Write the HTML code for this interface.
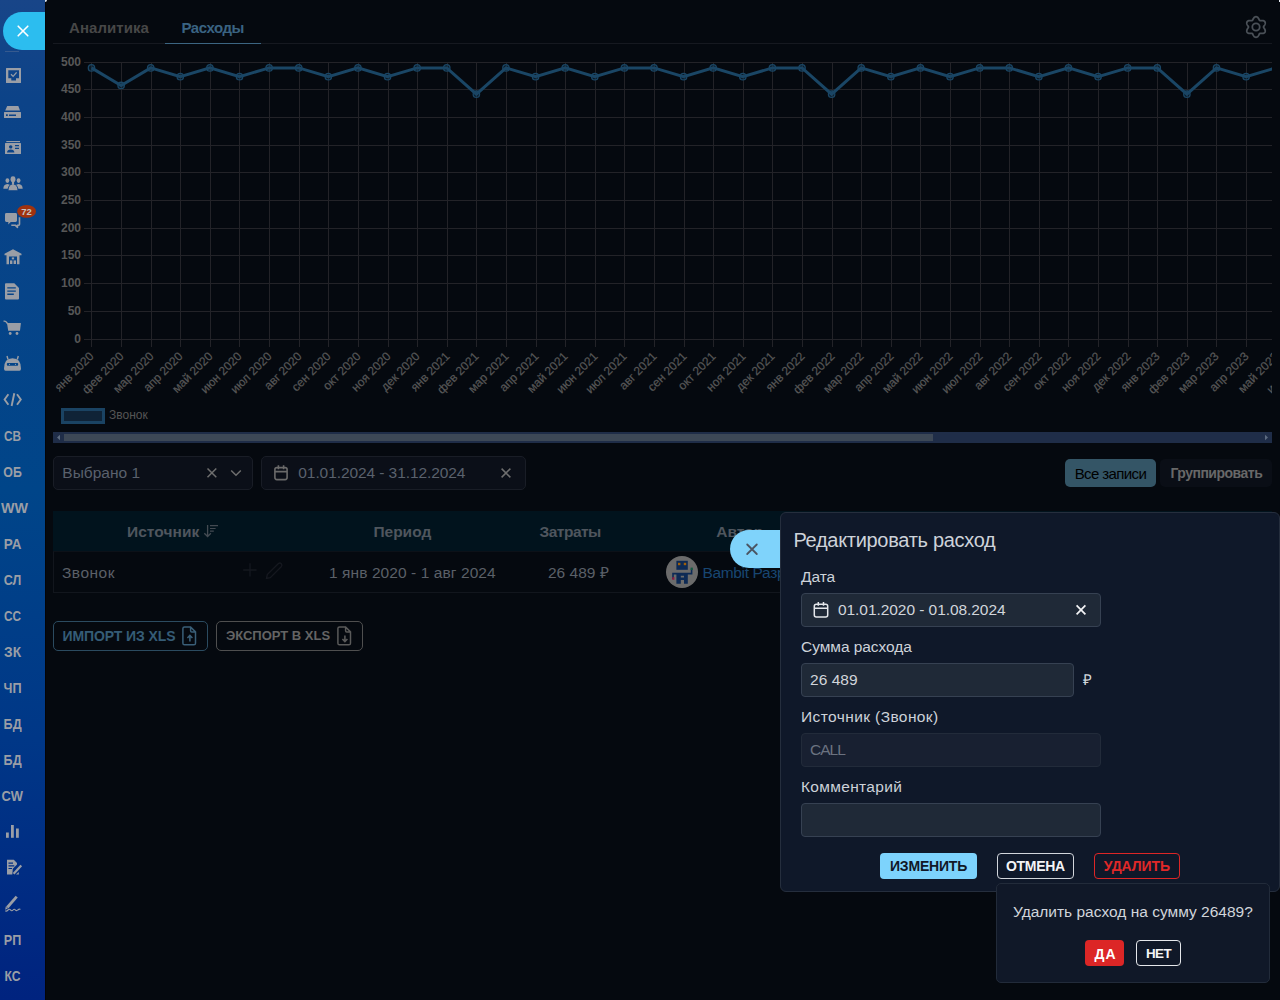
<!DOCTYPE html>
<html><head><meta charset="utf-8">
<style>
*{box-sizing:border-box;margin:0;padding:0}
html,body{width:1280px;height:1000px;overflow:hidden;background:#05090f;font-family:"Liberation Sans",sans-serif}
.abs{position:absolute}
.t{position:absolute;line-height:1;white-space:nowrap}
.sb{position:absolute;left:0;top:0;width:45px;height:1000px;background:linear-gradient(180deg,#184588 0%,#0c4388 10%,#004589 49%,#003787 74%,#00237f 100%)}
.pill{position:absolute;left:3px;top:12px;width:42px;height:38px;border-radius:19px 0 0 19px;background:#2cbdef}
.chart .yl{font-size:12px;font-weight:bold;fill:#575757;font-family:"Liberation Sans",sans-serif}
.chart .xl{font-size:12px;fill:#575757;stroke:#575757;stroke-width:0.2px;font-family:"Liberation Sans",sans-serif}
.inp{position:absolute;border:1px solid #191d26;background:#0b0f18;border-radius:5px}
.th{position:absolute;top:523.6px;font-size:15.5px;font-weight:bold;color:#4f565e;line-height:1;white-space:nowrap}
.td{position:absolute;top:564.6px;font-size:15.5px;color:#5b6068;line-height:1;white-space:nowrap}
.panel{position:absolute;left:780px;top:512px;width:500px;height:380px;background:#0f1829;border:1px solid #252e3d;border-radius:6px}
.lbl{position:absolute;left:801px;font-size:15.5px;color:#cdd2d9;line-height:1;white-space:nowrap}
.fin{position:absolute;left:801px;background:#1f2937;border:1px solid #364152;border-radius:4px}
.pb{position:absolute;border-radius:4px}
.pbt{position:absolute;font-weight:bold;font-size:14px;line-height:1;white-space:nowrap}
</style></head>
<body>
<!-- sidebar -->
<div class="sb"></div>
<div class="abs" style="left:45px;top:0;width:1px;height:1000px;background:#040406"></div>
<div class="abs" style="left:45px;top:0;width:2px;height:2px;border-radius:0 0 2px 0;background:#dfe6f0"></div>
<div class="abs" style="left:1279px;top:0;width:1px;height:2px;background:#e8ecf2"></div>
<div class="pill"></div>
<svg class="abs" style="left:17px;top:25px" width="12" height="12" viewBox="0 0 12 12"><path d="M1.2 1.2L10.8 10.8M10.8 1.2L1.2 10.8" stroke="#fff" stroke-width="1.6" stroke-linecap="round"/></svg>
<div class="abs" style="left:5px;top:51px;width:14px;height:1px;background:#5a6f95;opacity:.5"></div>
<svg class="abs" style="left:0;top:0" width="45" height="1000" viewBox="0 0 45 1000">
<g fill="#9a9ea6" stroke="none">
<path fill-rule="evenodd" d="M6 68.5Q6 68 6.5 68H20.5Q21 68 21 68.5V82.5Q21 83 20.5 83H6.5Q6 83 6 82.5Z M8.3 70.2H19V78.2H16V80.6H11.3V78.2H8.3Z"/>
<path d="M11 74.3L13.1 76.4L16.6 72.3" stroke="#9a9ea6" stroke-width="1.3" fill="none"/>
<path d="M7.2 106H18.3L20 110.4H5.2Z"/>
<path fill-rule="evenodd" d="M4.5 112H20.5Q21 112 21 112.5V117.5Q21 118 20.5 118H4.5Q4 118 4 117.5V112.5Q4 112 4.5 112Z M6 114.3H7.8V116H6Z M9 114.4H16V115.9H9Z"/>
<rect x="6.3" y="141" width="13.7" height="1.1"/>
<path fill-rule="evenodd" d="M5.6 143H20.4Q21 143 21 143.6V153.4Q21 154 20.4 154H5.6Q5 154 5 153.4V143.6Q5 143 5.6 143Z M10.7 145.2A1.7 1.7 0 1 0 10.71 145.2Z M7 152.4Q7.2 149.6 10.7 149.4Q14.2 149.6 14.4 152.4Z M15 145H19V146.3H15Z M15 147.7H19V149H15Z"/>
<ellipse cx="7.4" cy="180.6" rx="1.9" ry="2.4"/><path d="M3.3 188.8Q3.5 184.4 7.4 184.1Q11.3 184.4 11.5 188.8Z"/>
<ellipse cx="18.6" cy="180.6" rx="1.9" ry="2.4"/><path d="M14.5 188.8Q14.7 184.4 18.6 184.1Q22.5 184.4 22.7 188.8Z"/>
<g stroke="#0a4388" stroke-width="1"><ellipse cx="13" cy="179.2" rx="2.4" ry="2.9"/><path d="M7.9 190.8Q8.2 184.2 13 183.9Q17.8 184.2 18.1 190.8Z"/></g><path d="M11.9 181H14.1V184.8H11.9Z"/><ellipse cx="13" cy="179.2" rx="2.4" ry="2.9"/>
<path d="M6.4 213H15.6Q17 213 17 214.4V220.6Q17 222 15.6 222H10.8L8.2 224.6L8.4 222H6.4Q5 222 5 220.6V214.4Q5 213 6.4 213Z"/>
<path d="M19.5 217.2V224.3Q19.5 225.2 18.6 225.2H17.4L17.5 227.4L15.2 225.2H11.3" stroke="#9a9ea6" stroke-width="1.6" fill="none" stroke-linejoin="round"/>
<ellipse cx="26.6" cy="211.4" rx="9.4" ry="6.4" fill="#a0320f"/>
<text x="26.6" y="215.1" text-anchor="middle" font-size="9.5" font-weight="bold" fill="#c6c6c6" font-family="Liberation Sans,sans-serif">72</text>
<path fill-rule="evenodd" d="M13 249.2L21.5 253.8V255.2H19.5V264.3H6.5V255.2H4.5V253.8Z M9 256.5H17V264.3H9Z"/>
<rect x="11.8" y="257.4" width="2.3" height="2"/><rect x="10" y="260.4" width="2.4" height="3.6"/><rect x="13.6" y="260.4" width="2.4" height="3.6"/>
<path fill-rule="evenodd" d="M5.9 283.2H14.3L19 288V298.6Q19 299.6 18 299.6H5.9Q5 299.6 5 298.6V284.2Q5 283.2 5.9 283.2Z M7.3 287.3H15.8V288.6H7.3Z M7.3 290.5H15.8V291.8H7.3Z M7.3 293.6H13.8V294.9H7.3Z"/>
<path d="M3.6 321.2Q5.8 320.8 6.4 322.2L7.8 324" stroke="#9a9ea6" stroke-width="1.4" fill="none"/>
<path d="M7 323H20.9L20 330.8H8.2Z"/>
<circle cx="10.2" cy="333.5" r="1.4"/><circle cx="17" cy="333.5" r="1.4"/>
<path fill-rule="evenodd" d="M4 368.6Q4 358.2 12.5 358.2Q21 358.2 21 368.6Q21 370.8 19.5 370.8H5.5Q4 370.8 4 368.6Z M7.8 362.9H17.2Q18.2 362.9 18.2 364.3Q18.2 365.8 17.2 365.8H7.8Q6.8 365.8 6.8 364.3Q6.8 362.9 7.8 362.9Z"/>
<path d="M7 356L8 359.5M18.3 356L17.3 359.5" stroke="#9a9ea6" stroke-width="1.4"/>
<circle cx="9.5" cy="364.3" r="0.6"/><circle cx="15.5" cy="364.3" r="0.6"/>
<path d="M8.4 394.3L4.6 399.5L8.4 404.8M17 394.3L20.8 399.5L17 404.8" stroke="#9a9ea6" stroke-width="1.9" fill="none"/>
<path d="M14.3 393.2L11.6 406" stroke="#9a9ea6" stroke-width="1.9" fill="none"/>
<rect x="6" y="832.5" width="2.8" height="5.3"/><rect x="11" y="825" width="2.8" height="12.8"/><rect x="16" y="828.5" width="2.8" height="9.3"/>
<path fill-rule="evenodd" d="M7 859.8H13.8L17 863V864.6L12.8 868.8L12.3 874.6H7Z M8.5 862.6H13V863.7H8.5Z M8.5 865.3H14.3V866.4H8.5Z M8.5 868H12V869.1H8.5Z"/>
<path d="M13.6 873.8L21.3 865.6" stroke="#9a9ea6" stroke-width="2.2"/>
<path d="M16 874.6H18.8V872Z"/>
<path d="M7.2 907.5L16.7 896.6" stroke="#9a9ea6" stroke-width="2.8"/>
<path d="M5.2 909.8L5.8 906.5L7.8 908.6Z"/>
<path d="M5.3 910.8Q6.5 911.6 8 910Q9.5 908.5 10.5 909.8Q11.8 911.5 13 910Q14.3 908.5 15.3 909.8Q16.6 911.3 17.8 910Q19.2 908.6 20.5 909.4" stroke="#9a9ea6" stroke-width="1.1" fill="none"/>
</g>
<text x="12.6" y="441.1" text-anchor="middle" font-size="14" font-weight="bold" fill="#9a9ea6" font-family="Liberation Sans,sans-serif" textLength="17" lengthAdjust="spacingAndGlyphs" >СВ</text>
<text x="12.6" y="477.1" text-anchor="middle" font-size="14" font-weight="bold" fill="#9a9ea6" font-family="Liberation Sans,sans-serif" textLength="18.5" lengthAdjust="spacingAndGlyphs" >ОБ</text>
<text x="14.4" y="513.1" text-anchor="middle" font-size="14" font-weight="bold" fill="#9a9ea6" font-family="Liberation Sans,sans-serif" textLength="27" lengthAdjust="spacingAndGlyphs" >WW</text>
<text x="12.6" y="549.1" text-anchor="middle" font-size="14" font-weight="bold" fill="#9a9ea6" font-family="Liberation Sans,sans-serif" textLength="17.5" lengthAdjust="spacingAndGlyphs" >РА</text>
<text x="12.6" y="585.1" text-anchor="middle" font-size="14" font-weight="bold" fill="#9a9ea6" font-family="Liberation Sans,sans-serif" textLength="17.5" lengthAdjust="spacingAndGlyphs" >СЛ</text>
<text x="12.6" y="621.1" text-anchor="middle" font-size="14" font-weight="bold" fill="#9a9ea6" font-family="Liberation Sans,sans-serif" textLength="17" lengthAdjust="spacingAndGlyphs" >СС</text>
<text x="12.6" y="657.1" text-anchor="middle" font-size="14" font-weight="bold" fill="#9a9ea6" font-family="Liberation Sans,sans-serif" textLength="17" lengthAdjust="spacingAndGlyphs" >ЗК</text>
<text x="12.6" y="693.1" text-anchor="middle" font-size="14" font-weight="bold" fill="#9a9ea6" font-family="Liberation Sans,sans-serif" textLength="18" lengthAdjust="spacingAndGlyphs" >ЧП</text>
<text x="12.6" y="729.1" text-anchor="middle" font-size="14" font-weight="bold" fill="#9a9ea6" font-family="Liberation Sans,sans-serif" textLength="18" lengthAdjust="spacingAndGlyphs" >БД</text>
<text x="12.6" y="765.1" text-anchor="middle" font-size="14" font-weight="bold" fill="#9a9ea6" font-family="Liberation Sans,sans-serif" textLength="18" lengthAdjust="spacingAndGlyphs" >БД</text>
<text x="12.3" y="801.1" text-anchor="middle" font-size="14" font-weight="bold" fill="#9a9ea6" font-family="Liberation Sans,sans-serif" textLength="21.5" lengthAdjust="spacingAndGlyphs" >CW</text>
<text x="12.6" y="945.1" text-anchor="middle" font-size="14" font-weight="bold" fill="#9a9ea6" font-family="Liberation Sans,sans-serif" textLength="17.5" lengthAdjust="spacingAndGlyphs" >РП</text>
<text x="12.6" y="981.1" text-anchor="middle" font-size="14" font-weight="bold" fill="#9a9ea6" font-family="Liberation Sans,sans-serif" textLength="16" lengthAdjust="spacingAndGlyphs" >КС</text>
</svg>

<!-- tabs -->
<div class="abs" style="left:53px;top:43px;width:1219px;height:1px;background:#161920"></div>
<div class="t" style="left:69px;top:20.1px;font-size:15px;font-weight:bold;color:#474747;letter-spacing:0.05px">Аналитика</div>
<div class="t" style="left:181.5px;top:20.1px;font-size:15px;font-weight:bold;color:#3a6382;letter-spacing:-0.45px">Расходы</div>
<div class="abs" style="left:165px;top:43px;width:96px;height:1px;background:#3c6582"></div>
<svg class="abs" style="left:0;top:0" width="1280" height="50"><path d="M1263.50 27.00 L1263.55 27.20 L1263.63 27.40 L1263.75 27.61 L1263.88 27.83 L1264.03 28.06 L1264.19 28.30 L1264.35 28.55 L1264.51 28.81 L1264.66 29.08 L1264.80 29.36 L1264.92 29.64 L1265.03 29.93 L1265.11 30.23 L1265.18 30.52 L1265.21 30.81 L1265.21 31.10 L1265.19 31.38 L1265.13 31.65 L1265.04 31.91 L1264.92 32.15 L1264.77 32.37 L1264.59 32.58 L1264.39 32.76 L1264.16 32.93 L1263.91 33.07 L1263.64 33.18 L1263.35 33.28 L1263.06 33.35 L1262.75 33.41 L1262.44 33.44 L1262.13 33.46 L1261.82 33.46 L1261.51 33.46 L1261.22 33.44 L1260.93 33.43 L1260.66 33.41 L1260.40 33.41 L1260.16 33.41 L1259.94 33.44 L1259.75 33.50 L1259.60 33.63 L1259.47 33.81 L1259.35 34.02 L1259.22 34.24 L1259.10 34.49 L1258.97 34.74 L1258.83 35.00 L1258.69 35.27 L1258.53 35.54 L1258.36 35.80 L1258.17 36.05 L1257.97 36.29 L1257.76 36.51 L1257.54 36.71 L1257.30 36.88 L1257.05 37.03 L1256.80 37.15 L1256.54 37.23 L1256.27 37.28 L1256.00 37.30 L1255.73 37.28 L1255.46 37.23 L1255.20 37.15 L1254.95 37.03 L1254.70 36.88 L1254.46 36.71 L1254.24 36.51 L1254.03 36.29 L1253.83 36.05 L1253.64 35.80 L1253.47 35.54 L1253.31 35.27 L1253.17 35.00 L1253.03 34.74 L1252.90 34.49 L1252.78 34.24 L1252.65 34.02 L1252.53 33.81 L1252.40 33.63 L1252.25 33.50 L1252.06 33.44 L1251.84 33.41 L1251.60 33.41 L1251.34 33.41 L1251.07 33.43 L1250.78 33.44 L1250.49 33.46 L1250.18 33.46 L1249.87 33.46 L1249.56 33.44 L1249.25 33.41 L1248.94 33.35 L1248.65 33.28 L1248.36 33.18 L1248.09 33.07 L1247.84 32.93 L1247.61 32.76 L1247.41 32.58 L1247.23 32.37 L1247.08 32.15 L1246.96 31.91 L1246.87 31.65 L1246.81 31.38 L1246.79 31.10 L1246.79 30.81 L1246.82 30.52 L1246.89 30.23 L1246.97 29.93 L1247.08 29.64 L1247.20 29.36 L1247.34 29.08 L1247.49 28.81 L1247.65 28.55 L1247.81 28.30 L1247.97 28.06 L1248.12 27.83 L1248.25 27.61 L1248.37 27.40 L1248.45 27.20 L1248.50 27.00 L1248.45 26.80 L1248.37 26.60 L1248.25 26.39 L1248.12 26.17 L1247.97 25.94 L1247.81 25.70 L1247.65 25.45 L1247.49 25.19 L1247.34 24.92 L1247.20 24.64 L1247.08 24.36 L1246.97 24.07 L1246.89 23.77 L1246.82 23.48 L1246.79 23.19 L1246.79 22.90 L1246.81 22.62 L1246.87 22.35 L1246.96 22.09 L1247.08 21.85 L1247.23 21.63 L1247.41 21.42 L1247.61 21.24 L1247.84 21.07 L1248.09 20.93 L1248.36 20.82 L1248.65 20.72 L1248.94 20.65 L1249.25 20.59 L1249.56 20.56 L1249.87 20.54 L1250.18 20.54 L1250.49 20.54 L1250.78 20.56 L1251.07 20.57 L1251.34 20.59 L1251.60 20.59 L1251.84 20.59 L1252.06 20.56 L1252.25 20.50 L1252.40 20.37 L1252.53 20.19 L1252.65 19.98 L1252.78 19.76 L1252.90 19.51 L1253.03 19.26 L1253.17 19.00 L1253.31 18.73 L1253.47 18.46 L1253.64 18.20 L1253.83 17.95 L1254.03 17.71 L1254.24 17.49 L1254.46 17.29 L1254.70 17.12 L1254.95 16.97 L1255.20 16.85 L1255.46 16.77 L1255.73 16.72 L1256.00 16.70 L1256.27 16.72 L1256.54 16.77 L1256.80 16.85 L1257.05 16.97 L1257.30 17.12 L1257.54 17.29 L1257.76 17.49 L1257.97 17.71 L1258.17 17.95 L1258.36 18.20 L1258.53 18.46 L1258.69 18.73 L1258.83 19.00 L1258.97 19.26 L1259.10 19.51 L1259.22 19.76 L1259.35 19.98 L1259.47 20.19 L1259.60 20.37 L1259.75 20.50 L1259.94 20.56 L1260.16 20.59 L1260.40 20.59 L1260.66 20.59 L1260.93 20.57 L1261.22 20.56 L1261.51 20.54 L1261.82 20.54 L1262.13 20.54 L1262.44 20.56 L1262.75 20.59 L1263.06 20.65 L1263.35 20.72 L1263.64 20.82 L1263.91 20.93 L1264.16 21.07 L1264.39 21.24 L1264.59 21.42 L1264.77 21.63 L1264.92 21.85 L1265.04 22.09 L1265.13 22.35 L1265.19 22.62 L1265.21 22.90 L1265.21 23.19 L1265.18 23.48 L1265.11 23.77 L1265.03 24.07 L1264.92 24.36 L1264.80 24.64 L1264.66 24.92 L1264.51 25.19 L1264.35 25.45 L1264.19 25.70 L1264.03 25.94 L1263.88 26.17 L1263.75 26.39 L1263.63 26.60 L1263.55 26.80 L1263.50 27.00Z" fill="none" stroke="#4a5057" stroke-width="1.8" stroke-linejoin="round"/><circle cx="1256" cy="27" r="3.7" fill="none" stroke="#4a5057" stroke-width="1.8"/></svg>

<svg class="chart" width="1280" height="460" viewBox="0 0 1280 460" style="position:absolute;left:0;top:0">
<defs><clipPath id="cc"><rect x="53" y="44" width="1219" height="400"/></clipPath></defs>
<g clip-path="url(#cc)">
<path d="M84 62.5H1272 M84 89.5H1272 M84 117.5H1272 M84 145.5H1272 M84 172.5H1272 M84 200.5H1272 M84 228.5H1272 M84 255.5H1272 M84 283.5H1272 M84 311.5H1272 M84 339.5H1272 M91.5 62V347 M121.5 62V347 M151.5 62V347 M180.5 62V347 M210.5 62V347 M239.5 62V347 M269.5 62V347 M299.5 62V347 M328.5 62V347 M358.5 62V347 M388.5 62V347 M417.5 62V347 M447.5 62V347 M476.5 62V347 M506.5 62V347 M536.5 62V347 M565.5 62V347 M595.5 62V347 M624.5 62V347 M654.5 62V347 M684.5 62V347 M713.5 62V347 M743.5 62V347 M772.5 62V347 M802.5 62V347 M832.5 62V347 M861.5 62V347 M891.5 62V347 M920.5 62V347 M950.5 62V347 M980.5 62V347 M1009.5 62V347 M1039.5 62V347 M1068.5 62V347 M1098.5 62V347 M1128.5 62V347 M1157.5 62V347 M1187.5 62V347 M1216.5 62V347 M1246.5 62V347 M1276.5 62V347" stroke="#232328" stroke-width="1" fill="none"/>
<text x="81" y="65.9" text-anchor="end" class="yl">500</text>
<text x="81" y="92.9" text-anchor="end" class="yl">450</text>
<text x="81" y="120.9" text-anchor="end" class="yl">400</text>
<text x="81" y="148.9" text-anchor="end" class="yl">350</text>
<text x="81" y="175.9" text-anchor="end" class="yl">300</text>
<text x="81" y="203.9" text-anchor="end" class="yl">250</text>
<text x="81" y="231.9" text-anchor="end" class="yl">200</text>
<text x="81" y="258.9" text-anchor="end" class="yl">150</text>
<text x="81" y="286.9" text-anchor="end" class="yl">100</text>
<text x="81" y="314.9" text-anchor="end" class="yl">50</text>
<text x="81" y="342.9" text-anchor="end" class="yl">0</text>
<text transform="translate(94.5,357) rotate(-45)" text-anchor="end" class="xl">янв 2020</text>
<text transform="translate(124.5,357) rotate(-45)" text-anchor="end" class="xl">фев 2020</text>
<text transform="translate(154.5,357) rotate(-45)" text-anchor="end" class="xl">мар 2020</text>
<text transform="translate(183.5,357) rotate(-45)" text-anchor="end" class="xl">апр 2020</text>
<text transform="translate(213.5,357) rotate(-45)" text-anchor="end" class="xl">май 2020</text>
<text transform="translate(242.5,357) rotate(-45)" text-anchor="end" class="xl">июн 2020</text>
<text transform="translate(272.5,357) rotate(-45)" text-anchor="end" class="xl">июл 2020</text>
<text transform="translate(302.5,357) rotate(-45)" text-anchor="end" class="xl">авг 2020</text>
<text transform="translate(331.5,357) rotate(-45)" text-anchor="end" class="xl">сен 2020</text>
<text transform="translate(361.5,357) rotate(-45)" text-anchor="end" class="xl">окт 2020</text>
<text transform="translate(391.5,357) rotate(-45)" text-anchor="end" class="xl">ноя 2020</text>
<text transform="translate(420.5,357) rotate(-45)" text-anchor="end" class="xl">дек 2020</text>
<text transform="translate(450.5,357) rotate(-45)" text-anchor="end" class="xl">янв 2021</text>
<text transform="translate(479.5,357) rotate(-45)" text-anchor="end" class="xl">фев 2021</text>
<text transform="translate(509.5,357) rotate(-45)" text-anchor="end" class="xl">мар 2021</text>
<text transform="translate(539.5,357) rotate(-45)" text-anchor="end" class="xl">апр 2021</text>
<text transform="translate(568.5,357) rotate(-45)" text-anchor="end" class="xl">май 2021</text>
<text transform="translate(598.5,357) rotate(-45)" text-anchor="end" class="xl">июн 2021</text>
<text transform="translate(627.5,357) rotate(-45)" text-anchor="end" class="xl">июл 2021</text>
<text transform="translate(657.5,357) rotate(-45)" text-anchor="end" class="xl">авг 2021</text>
<text transform="translate(687.5,357) rotate(-45)" text-anchor="end" class="xl">сен 2021</text>
<text transform="translate(716.5,357) rotate(-45)" text-anchor="end" class="xl">окт 2021</text>
<text transform="translate(746.5,357) rotate(-45)" text-anchor="end" class="xl">ноя 2021</text>
<text transform="translate(775.5,357) rotate(-45)" text-anchor="end" class="xl">дек 2021</text>
<text transform="translate(805.5,357) rotate(-45)" text-anchor="end" class="xl">янв 2022</text>
<text transform="translate(835.5,357) rotate(-45)" text-anchor="end" class="xl">фев 2022</text>
<text transform="translate(864.5,357) rotate(-45)" text-anchor="end" class="xl">мар 2022</text>
<text transform="translate(894.5,357) rotate(-45)" text-anchor="end" class="xl">апр 2022</text>
<text transform="translate(923.5,357) rotate(-45)" text-anchor="end" class="xl">май 2022</text>
<text transform="translate(953.5,357) rotate(-45)" text-anchor="end" class="xl">июн 2022</text>
<text transform="translate(983.5,357) rotate(-45)" text-anchor="end" class="xl">июл 2022</text>
<text transform="translate(1012.5,357) rotate(-45)" text-anchor="end" class="xl">авг 2022</text>
<text transform="translate(1042.5,357) rotate(-45)" text-anchor="end" class="xl">сен 2022</text>
<text transform="translate(1071.5,357) rotate(-45)" text-anchor="end" class="xl">окт 2022</text>
<text transform="translate(1101.5,357) rotate(-45)" text-anchor="end" class="xl">ноя 2022</text>
<text transform="translate(1131.5,357) rotate(-45)" text-anchor="end" class="xl">дек 2022</text>
<text transform="translate(1160.5,357) rotate(-45)" text-anchor="end" class="xl">янв 2023</text>
<text transform="translate(1190.5,357) rotate(-45)" text-anchor="end" class="xl">фев 2023</text>
<text transform="translate(1219.5,357) rotate(-45)" text-anchor="end" class="xl">мар 2023</text>
<text transform="translate(1249.5,357) rotate(-45)" text-anchor="end" class="xl">апр 2023</text>
<text transform="translate(1279.5,357) rotate(-45)" text-anchor="end" class="xl">май 2023</text>
<text transform="translate(1308.5,357) rotate(-45)" text-anchor="end" class="xl">июн 2023</text>
<path d="M91.50 67.90 L121.11 85.43 L150.71 67.90 L180.31 76.67 L209.92 67.90 L239.53 76.67 L269.13 67.90 L298.74 67.90 L328.34 76.67 L357.94 67.90 L387.55 76.67 L417.16 67.90 L446.76 67.90 L476.37 94.19 L505.97 67.90 L535.58 76.67 L565.18 67.90 L594.79 76.67 L624.39 67.90 L654.00 67.90 L683.60 76.67 L713.21 67.90 L742.81 76.67 L772.41 67.90 L802.02 67.90 L831.62 94.19 L861.23 67.90 L890.84 76.67 L920.44 67.90 L950.04 76.67 L979.65 67.90 L1009.25 67.90 L1038.86 76.67 L1068.47 67.90 L1098.07 76.67 L1127.67 67.90 L1157.28 67.90 L1186.88 94.19 L1216.49 67.90 L1246.10 76.67 L1275.70 67.90 L1305.31 76.67" stroke="#1a4665" stroke-width="3" fill="none" stroke-linejoin="miter"/>
<circle cx="91.50" cy="67.90" r="3.2" fill="rgba(26,70,101,0.3)" stroke="#1a4665" stroke-width="1.3"/>
<circle cx="121.11" cy="85.43" r="3.2" fill="rgba(26,70,101,0.3)" stroke="#1a4665" stroke-width="1.3"/>
<circle cx="150.71" cy="67.90" r="3.2" fill="rgba(26,70,101,0.3)" stroke="#1a4665" stroke-width="1.3"/>
<circle cx="180.31" cy="76.67" r="3.2" fill="rgba(26,70,101,0.3)" stroke="#1a4665" stroke-width="1.3"/>
<circle cx="209.92" cy="67.90" r="3.2" fill="rgba(26,70,101,0.3)" stroke="#1a4665" stroke-width="1.3"/>
<circle cx="239.53" cy="76.67" r="3.2" fill="rgba(26,70,101,0.3)" stroke="#1a4665" stroke-width="1.3"/>
<circle cx="269.13" cy="67.90" r="3.2" fill="rgba(26,70,101,0.3)" stroke="#1a4665" stroke-width="1.3"/>
<circle cx="298.74" cy="67.90" r="3.2" fill="rgba(26,70,101,0.3)" stroke="#1a4665" stroke-width="1.3"/>
<circle cx="328.34" cy="76.67" r="3.2" fill="rgba(26,70,101,0.3)" stroke="#1a4665" stroke-width="1.3"/>
<circle cx="357.94" cy="67.90" r="3.2" fill="rgba(26,70,101,0.3)" stroke="#1a4665" stroke-width="1.3"/>
<circle cx="387.55" cy="76.67" r="3.2" fill="rgba(26,70,101,0.3)" stroke="#1a4665" stroke-width="1.3"/>
<circle cx="417.16" cy="67.90" r="3.2" fill="rgba(26,70,101,0.3)" stroke="#1a4665" stroke-width="1.3"/>
<circle cx="446.76" cy="67.90" r="3.2" fill="rgba(26,70,101,0.3)" stroke="#1a4665" stroke-width="1.3"/>
<circle cx="476.37" cy="94.19" r="3.2" fill="rgba(26,70,101,0.3)" stroke="#1a4665" stroke-width="1.3"/>
<circle cx="505.97" cy="67.90" r="3.2" fill="rgba(26,70,101,0.3)" stroke="#1a4665" stroke-width="1.3"/>
<circle cx="535.58" cy="76.67" r="3.2" fill="rgba(26,70,101,0.3)" stroke="#1a4665" stroke-width="1.3"/>
<circle cx="565.18" cy="67.90" r="3.2" fill="rgba(26,70,101,0.3)" stroke="#1a4665" stroke-width="1.3"/>
<circle cx="594.79" cy="76.67" r="3.2" fill="rgba(26,70,101,0.3)" stroke="#1a4665" stroke-width="1.3"/>
<circle cx="624.39" cy="67.90" r="3.2" fill="rgba(26,70,101,0.3)" stroke="#1a4665" stroke-width="1.3"/>
<circle cx="654.00" cy="67.90" r="3.2" fill="rgba(26,70,101,0.3)" stroke="#1a4665" stroke-width="1.3"/>
<circle cx="683.60" cy="76.67" r="3.2" fill="rgba(26,70,101,0.3)" stroke="#1a4665" stroke-width="1.3"/>
<circle cx="713.21" cy="67.90" r="3.2" fill="rgba(26,70,101,0.3)" stroke="#1a4665" stroke-width="1.3"/>
<circle cx="742.81" cy="76.67" r="3.2" fill="rgba(26,70,101,0.3)" stroke="#1a4665" stroke-width="1.3"/>
<circle cx="772.41" cy="67.90" r="3.2" fill="rgba(26,70,101,0.3)" stroke="#1a4665" stroke-width="1.3"/>
<circle cx="802.02" cy="67.90" r="3.2" fill="rgba(26,70,101,0.3)" stroke="#1a4665" stroke-width="1.3"/>
<circle cx="831.62" cy="94.19" r="3.2" fill="rgba(26,70,101,0.3)" stroke="#1a4665" stroke-width="1.3"/>
<circle cx="861.23" cy="67.90" r="3.2" fill="rgba(26,70,101,0.3)" stroke="#1a4665" stroke-width="1.3"/>
<circle cx="890.84" cy="76.67" r="3.2" fill="rgba(26,70,101,0.3)" stroke="#1a4665" stroke-width="1.3"/>
<circle cx="920.44" cy="67.90" r="3.2" fill="rgba(26,70,101,0.3)" stroke="#1a4665" stroke-width="1.3"/>
<circle cx="950.04" cy="76.67" r="3.2" fill="rgba(26,70,101,0.3)" stroke="#1a4665" stroke-width="1.3"/>
<circle cx="979.65" cy="67.90" r="3.2" fill="rgba(26,70,101,0.3)" stroke="#1a4665" stroke-width="1.3"/>
<circle cx="1009.25" cy="67.90" r="3.2" fill="rgba(26,70,101,0.3)" stroke="#1a4665" stroke-width="1.3"/>
<circle cx="1038.86" cy="76.67" r="3.2" fill="rgba(26,70,101,0.3)" stroke="#1a4665" stroke-width="1.3"/>
<circle cx="1068.47" cy="67.90" r="3.2" fill="rgba(26,70,101,0.3)" stroke="#1a4665" stroke-width="1.3"/>
<circle cx="1098.07" cy="76.67" r="3.2" fill="rgba(26,70,101,0.3)" stroke="#1a4665" stroke-width="1.3"/>
<circle cx="1127.67" cy="67.90" r="3.2" fill="rgba(26,70,101,0.3)" stroke="#1a4665" stroke-width="1.3"/>
<circle cx="1157.28" cy="67.90" r="3.2" fill="rgba(26,70,101,0.3)" stroke="#1a4665" stroke-width="1.3"/>
<circle cx="1186.88" cy="94.19" r="3.2" fill="rgba(26,70,101,0.3)" stroke="#1a4665" stroke-width="1.3"/>
<circle cx="1216.49" cy="67.90" r="3.2" fill="rgba(26,70,101,0.3)" stroke="#1a4665" stroke-width="1.3"/>
<circle cx="1246.10" cy="76.67" r="3.2" fill="rgba(26,70,101,0.3)" stroke="#1a4665" stroke-width="1.3"/>
<circle cx="1275.70" cy="67.90" r="3.2" fill="rgba(26,70,101,0.3)" stroke="#1a4665" stroke-width="1.3"/>
</g></svg>

<!-- legend -->
<div class="abs" style="left:61px;top:408px;width:44px;height:16px;background:#0f2337;border:3px solid #1a4363"></div>
<div class="t" style="left:109px;top:409px;font-size:12px;color:#555;">Звонок</div>

<!-- scrollbar -->
<div class="abs" style="left:53px;top:432px;width:1219px;height:11px;background:#1f2d48"></div>
<div class="abs" style="left:64px;top:434px;width:869px;height:7px;background:#3d4856"></div>
<svg class="abs" style="left:53px;top:432px" width="1219" height="11"><path d="M4 5.5L7 2.8V8.2Z" fill="#5d6b80"/><path d="M1215 5.5L1212 2.8V8.2Z" fill="#5d6b80"/></svg>

<!-- filters -->
<div class="inp" style="left:53px;top:456px;width:200px;height:34px"></div>
<div class="t" style="left:62.3px;top:465.2px;font-size:15.5px;color:#5a616d;letter-spacing:0px">Выбрано 1</div>
<svg class="abs" style="left:200px;top:460px" width="50" height="26"><path d="M7.5 8.5L16.3 17.3M16.3 8.5L7.5 17.3" stroke="#6e6e6e" stroke-width="1.5"/><path d="M31.2 10.5L36 15.2L40.8 10.5" stroke="#6e6e6e" stroke-width="1.5" fill="none"/></svg>
<div class="inp" style="left:261px;top:456px;width:265px;height:34px"></div>
<svg class="abs" style="left:268px;top:460px" width="32" height="26"><rect x="6.9" y="7.6" width="12.2" height="12" rx="2" fill="none" stroke="#6a6a6a" stroke-width="1.6"/><path d="M6.9 11.6H19.1M10.4 5.2V9.2M15.6 5.2V9.2" stroke="#6a6a6a" stroke-width="1.6"/></svg>
<div class="t" style="left:298.3px;top:465.2px;font-size:15.5px;color:#5a616d;letter-spacing:-0.08px">01.01.2024 - 31.12.2024</div>
<svg class="abs" style="left:496px;top:462px" width="20" height="22"><path d="M5.6 6.6L14.4 15.4M14.4 6.6L5.6 15.4" stroke="#6e6e6e" stroke-width="1.5"/></svg>
<div class="pb" style="left:1065px;top:459px;width:91px;height:28px;background:#345566;border-radius:5px"></div>
<div class="t" style="left:1074.7px;top:465.8px;font-size:15px;color:#000;letter-spacing:-0.6px">Все записи</div>
<div class="pb" style="left:1160px;top:459px;width:112px;height:28px;background:#0a0e16;border-radius:5px"></div>
<div class="t" style="left:1170.4px;top:465.8px;font-size:14px;font-weight:bold;color:#686868;letter-spacing:-0.5px">Группировать</div>

<!-- table -->
<div class="abs" style="left:53px;top:511px;width:1219px;height:40px;background:#01131d"></div>
<div class="abs" style="left:53px;top:551px;width:1219px;height:42px;border:1px solid #12161d;border-top:1px solid #0c1118"></div>
<div class="th" style="left:127px;letter-spacing:0.05px">Источник</div>
<svg class="abs" style="left:198px;top:518px" width="30" height="26"><path d="M9.6 7V18.2M6.3 15.2L9.6 18.5L12.9 15.2" stroke="#434a52" stroke-width="1.3" fill="none"/><path d="M12 7.6H20M12 10.5H17.6M12 13.2H15.8" stroke="#434a52" stroke-width="1.2"/></svg>
<div class="th" style="left:373.4px">Период</div>
<div class="th" style="left:539.5px;letter-spacing:-0.5px">Затраты</div>
<div class="th" style="left:716.3px">Автор</div>
<div class="td" style="left:62px;letter-spacing:0.5px">Звонок</div>
<svg class="abs" style="left:236px;top:556px" width="54" height="34"><path d="M14 7.2V20.6M7.2 14H20.6" stroke="#15181f" stroke-width="1.3"/><path d="M30.5 22.5L31.3 18.6L42.2 7.7Q43.8 6.3 45.3 7.7Q46.6 9.2 45.2 10.7L34.3 21.6Z" stroke="#15181f" stroke-width="1.3" fill="none"/></svg>
<div class="td" style="left:329px;letter-spacing:0.08px">1 янв 2020 - 1 авг 2024</div>
<div class="td" style="left:548px;letter-spacing:0px">26 489 ₽</div>
<svg class="abs" style="left:662px;top:552px" width="40" height="40"><circle cx="20" cy="20" r="16" fill="#6b6b6b"/><rect x="14.4" y="8.8" width="11.4" height="9" fill="#0d2a55"/><rect x="16" y="10.8" width="2.4" height="2.4" fill="#a05f08"/><rect x="21.8" y="10.8" width="2.4" height="2.4" fill="#a05f08"/><path d="M11 27V21.6H29.6V16.8" stroke="#0d2a55" stroke-width="1.6" fill="none"/><path fill-rule="evenodd" d="M14.4 21H25.8V31.8H22V28H18.8V31.8H14.4Z M18.8 23.8H22V25.4H18.8Z" fill="#0d2a55"/><rect x="10.2" y="25.2" width="2.2" height="2.6" fill="#8a1c40"/><rect x="28.6" y="15.6" width="2.2" height="2.4" fill="#0f5a40"/></svg>
<div class="t" style="left:702.5px;top:564.6px;font-size:15.5px;color:#184672;letter-spacing:-0.35px">Bambit Разработчик</div>

<!-- import/export -->
<div class="abs" style="left:53px;top:621px;width:155px;height:30px;border:1px solid #2b4b60;border-radius:5px"></div>
<div class="t" style="left:62.5px;top:629px;font-size:14px;font-weight:bold;color:#355c76;letter-spacing:-0.1px">ИМПОРТ ИЗ XLS</div>
<svg class="abs" style="left:172.8px;top:618px" width="38" height="36"><path d="M11.5 9H17.6L22.5 13.9V25.2Q22.5 26.8 20.9 26.8H11.5Q9.9 26.8 9.9 25.2V10.6Q9.9 9 11.5 9Z M17.6 9V12.8Q17.6 13.9 18.7 13.9H22.5" stroke="#3a5f78" stroke-width="1.5" fill="none"/><path d="M16.9 23.6V17.6M14.4 20L16.9 17.5L19.4 20" stroke="#3a5f78" stroke-width="1.6" fill="none"/></svg>
<div class="abs" style="left:216px;top:621px;width:147px;height:30px;border:1px solid #4f4f4f;border-radius:5px"></div>
<div class="t" style="left:225.9px;top:629px;font-size:13px;font-weight:bold;color:#646464;letter-spacing:0px">ЭКСПОРТ В XLS</div>
<svg class="abs" style="left:334.8px;top:618px" width="38" height="36"><path d="M4.5 9H10.6L15.5 13.9V25.2Q15.5 26.8 13.9 26.8H4.5Q2.9 26.8 2.9 25.2V10.6Q2.9 9 4.5 9Z M10.6 9V12.8Q10.6 13.9 11.7 13.9H15.5" stroke="#5a5a5a" stroke-width="1.5" fill="none"/><path d="M9.9 17.4V23.4M7.4 21L9.9 23.5L12.4 21" stroke="#5a5a5a" stroke-width="1.6" fill="none"/></svg>

<!-- close pill -->
<div class="abs" style="left:730px;top:530px;width:52px;height:38px;border-radius:19px 0 0 19px;background:#7fd3fb"></div>
<svg class="abs" style="left:740px;top:538px" width="24" height="22"><path d="M7.2 6.5L16.8 16M16.8 6.5L7.2 16" stroke="#4b5563" stroke-width="1.8" stroke-linecap="round"/></svg>

<!-- panel -->
<div class="panel"></div>
<div class="t" style="left:793.4px;top:529.6px;font-size:20px;color:#cdd2d9;letter-spacing:-0.3px">Редактировать расход</div>
<div class="lbl" style="top:569.3px;letter-spacing:-0.05px">Дата</div>
<div class="fin" style="top:593px;width:300px;height:34px"></div>
<svg class="abs" style="left:800px;top:595px" width="40" height="30"><rect x="14.3" y="9.2" width="13.4" height="12.8" rx="2" fill="none" stroke="#e5e7eb" stroke-width="1.5"/><path d="M14.3 13.3H27.7M18.3 7V10.8M23.5 7V10.8" stroke="#e5e7eb" stroke-width="1.5"/></svg>
<div class="t" style="left:838px;top:601.5px;font-size:15.5px;color:#d1d5db;letter-spacing:-0.06px">01.01.2020 - 01.08.2024</div>
<svg class="abs" style="left:1066px;top:598px" width="30" height="24"><path d="M10.6 7.4L19.4 16.4M19.4 7.4L10.6 16.4" stroke="#f3f4f6" stroke-width="1.7"/></svg>
<div class="lbl" style="top:639.3px;letter-spacing:-0.05px">Сумма расхода</div>
<div class="fin" style="top:663px;width:273px;height:34px"></div>
<div class="t" style="left:810px;top:671.5px;font-size:15.5px;color:#d1d5db;letter-spacing:0.05px">26 489</div>
<div class="t" style="left:1082.5px;top:672px;font-size:15px;color:#d1d5db">₽</div>
<div class="lbl" style="top:709.3px;letter-spacing:0.4px">Источник (Звонок)</div>
<div class="fin" style="top:733px;width:300px;height:34px;background:#182031;border-color:#222b3a"></div>
<div class="t" style="left:810px;top:741.5px;font-size:15.5px;color:#6b7280;letter-spacing:-1px">CALL</div>
<div class="lbl" style="top:779.3px;letter-spacing:0.32px">Комментарий</div>
<div class="fin" style="top:803px;width:300px;height:34px"></div>
<div class="pb" style="left:880px;top:853px;width:97px;height:26px;background:#7dd3fc"></div>
<div class="pbt" style="left:890px;top:859.4px;color:#111827;letter-spacing:-0.2px">ИЗМЕНИТЬ</div>
<div class="pb" style="left:997px;top:853px;width:77px;height:26px;border:1px solid #d1d5db"></div>
<div class="pbt" style="left:1006px;top:859.4px;color:#f3f4f6;letter-spacing:-0.3px">ОТМЕНА</div>
<div class="pb" style="left:1094px;top:853px;width:86px;height:26px;border:1px solid #dc2626"></div>
<div class="pbt" style="left:1103.8px;top:859.4px;color:#e02828;letter-spacing:-0.1px">УДАЛИТЬ</div>

<!-- popconfirm -->
<div class="abs" style="left:996px;top:883px;width:274px;height:100px;background:#101828;border:1px solid #222b3a;border-radius:5px"></div>
<div class="t" style="left:1013px;top:904.1px;font-size:15.5px;color:#d1d5db;letter-spacing:0px">Удалить расход на сумму 26489?</div>
<div class="pb" style="left:1085px;top:940px;width:39px;height:26px;background:#dc2626"></div>
<div class="pbt" style="left:1094.4px;top:946.7px;color:#fff;letter-spacing:1.1px">ДА</div>
<div class="pb" style="left:1136px;top:940px;width:45px;height:26px;border:1px solid #e5e7eb"></div>
<div class="pbt" style="left:1146px;top:946.9px;color:#f3f4f6;font-size:13.4px;letter-spacing:-0.55px">НЕТ</div>
</body></html>
